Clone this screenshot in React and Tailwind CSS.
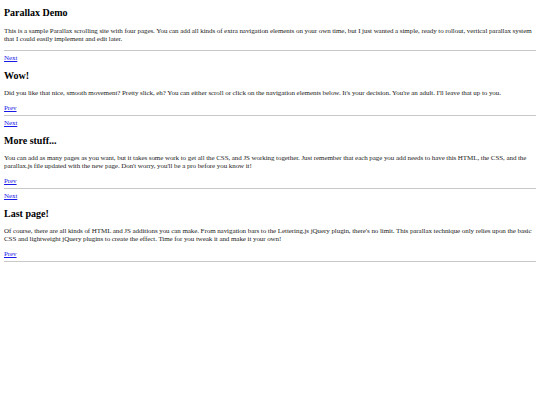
const pages = [
  {
    title: 'Wow!',
    text: "Did you like that nice, smooth movement? Pretty slick, eh? You can either scroll or click on the navigation elements below. It's your decision. You're an adult. I'll leave that up to you.",
  },
  {
    title: 'More stuff...',
    text: "You can add as many pages as you want, but it takes some work to get all the CSS, and JS working together. Just remember that each page you add needs to have this HTML, the CSS, and the parallax.js file updated with the new page. Don't worry, you'll be a pro before you know it!",
  },
  {
    title: 'Last page!',
    text: "Of course, there are all kinds of HTML and JS additions you can make. From navigation bars to the Lettering.js jQuery plugin, there's no limit. This parallax technique only relies upon the basic CSS and lightweight jQuery plugins to create the effect. Time for you tweak it and make it your own!",
  },
]

function NavLink({ children }) {
  return (
    <a href="#" className="block w-fit text-[#1a1ae6] underline">
      {children}
    </a>
  )
}

export default function App() {
  return (
    <div className="min-h-[405px] bg-white px-1 pt-[7px] font-['Liberation_Serif',serif] text-[7px] leading-[8px] tracking-[-0.07px] text-[#222]">
      <h1 className="text-[10px] leading-[12px] font-bold tracking-normal text-black">Parallax Demo</h1>
      <p className="mt-[8px]">
        This is a sample Parallax scrolling site with four pages. You can add all kinds of extra navigation elements on your own time, but I just wanted a simple, ready to rollout, vertical parallax system that I could easily implement and edit later.
      </p>
      <hr className="mt-[7px] border-[#c8c8c8]" />

      {pages.map((p) => (
        <section key={p.title}>
          <div className="mt-[3px]">
            <NavLink>Next</NavLink>
          </div>
          <h2 className="mt-[8px] text-[10px] leading-[12px] font-bold tracking-normal text-black">{p.title}</h2>
          <p className="mt-[7px]">{p.text}</p>
          <div className="mt-[7px]">
            <NavLink>Prev</NavLink>
          </div>
          <hr className="mt-[3px] border-[#c8c8c8]" />
        </section>
      ))}
    </div>
  )
}
